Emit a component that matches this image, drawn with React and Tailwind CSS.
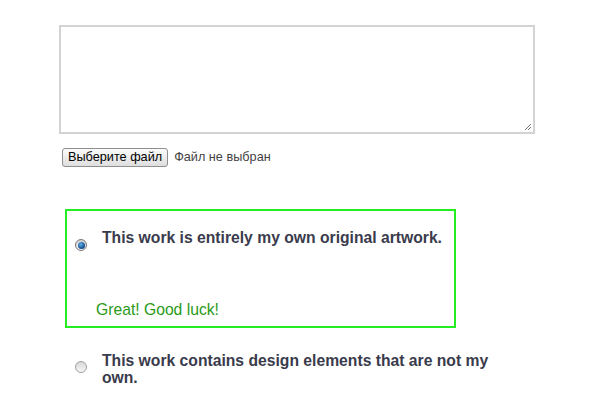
export default function App() {
  const font = { fontFamily: '"Liberation Sans", Arial, sans-serif' };
  return (
    <div className="w-[600px] h-[409px] bg-white overflow-hidden relative" style={font}>
      <div className="pl-[59px] pt-[25px]">
        <div className="relative w-[476px] h-[109px] border-2 border-[#d3d3d3] bg-white">
          <svg className="absolute right-[1px] bottom-[1px]" width="8" height="8" viewBox="0 0 8 8">
            <line x1="1" y1="7" x2="7" y2="1" stroke="#777" strokeWidth="1" />
            <line x1="4" y1="7" x2="7" y2="4" stroke="#777" strokeWidth="1" />
          </svg>
        </div>
        <div className="flex items-center mt-[14px] ml-[3px]">
          <div className="h-[19px] px-[5px] flex items-center border border-[#8f8f8f] rounded-[3px] bg-gradient-to-b from-[#fbfbfb] to-[#dedede] text-[12.7px] text-black leading-none">
            Выберите файл
          </div>
          <span className="ml-[6px] text-[12.7px] text-[#444]">Файл не выбран</span>
        </div>
        <div className="mt-[42px] ml-[6px] w-[391px] h-[119px] border-2 border-[#22ee22] relative">
          <div className="flex items-start pt-[18px] pl-[8px]">
            <span className="mt-[10px] w-[12px] h-[12px] rounded-full border border-[#7a7a7a] bg-gradient-to-b from-[#cfcfcf] to-[#f4f4f4] flex items-center justify-center shrink-0">
              <span className="w-[7px] h-[7px] rounded-full bg-[radial-gradient(circle_at_40%_35%,#5fb0e8,#154f91_65%,#0e3566)]" />
            </span>
            <span className="ml-[15px] text-[15.7px] font-bold text-[#3a3b4c] leading-[18px]">
              This work is entirely my own original artwork.
            </span>
          </div>
          <div className="absolute left-[29px] top-[90px] text-[15.7px] text-[#2a9a18] leading-[18px]">
            Great! Good luck!
          </div>
        </div>
        <div className="flex items-start mt-[24px] ml-[16px]">
          <span className="mt-[9px] w-[12px] h-[12px] rounded-full border border-[#a0a0a0] bg-gradient-to-b from-[#d8d8d8] to-[#f6f6f6] shrink-0" />
          <span className="ml-[15px] w-[400px] text-[15.7px] font-bold text-[#3a3b4c] leading-[17px]">
            This work contains design elements that are not my own.
          </span>
        </div>
      </div>
    </div>
  );
}
